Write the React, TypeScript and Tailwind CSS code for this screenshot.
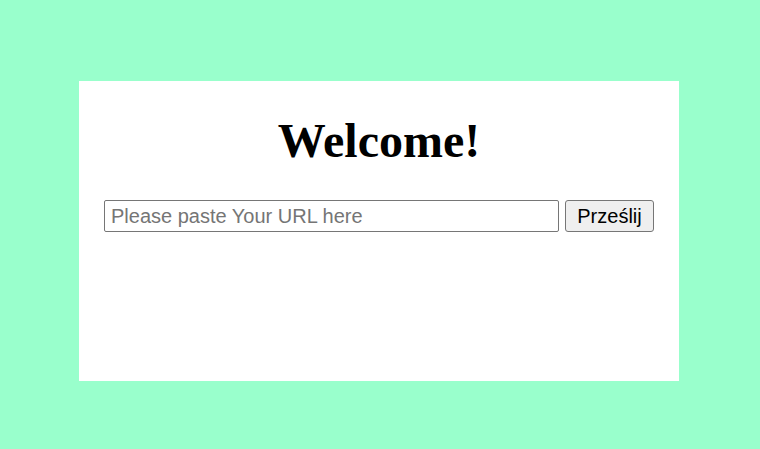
export default function App() {
  return (
    <div className="min-h-[449px] w-full bg-[#99ffcc] pl-[79px] pt-[81px]">
      <div className="flex h-[300px] w-[600px] flex-col bg-white px-[25px] pt-[32px]">
        <h1 className="text-center font-['Liberation_Serif',serif] text-[48px] font-bold leading-[56px] text-black">
          Welcome!
        </h1>
        <form
          className="mt-[31px] flex items-center gap-[6px] font-['Liberation_Sans',Arial,sans-serif]"
          onSubmit={(e) => e.preventDefault()}
        >
          <input
            type="text"
            placeholder="Please paste Your URL here"
            className="h-[32px] w-[455px] rounded-[2px] border border-[#767676] px-[6px] text-[20px] text-black outline-none placeholder:text-[#757575]"
          />
          <button
            type="submit"
            className="h-[32px] w-[89px] rounded-[3px] border border-[#767676] bg-[#efefef] text-[20px] text-black"
          >
            Prześlij
          </button>
        </form>
      </div>
    </div>
  );
}
